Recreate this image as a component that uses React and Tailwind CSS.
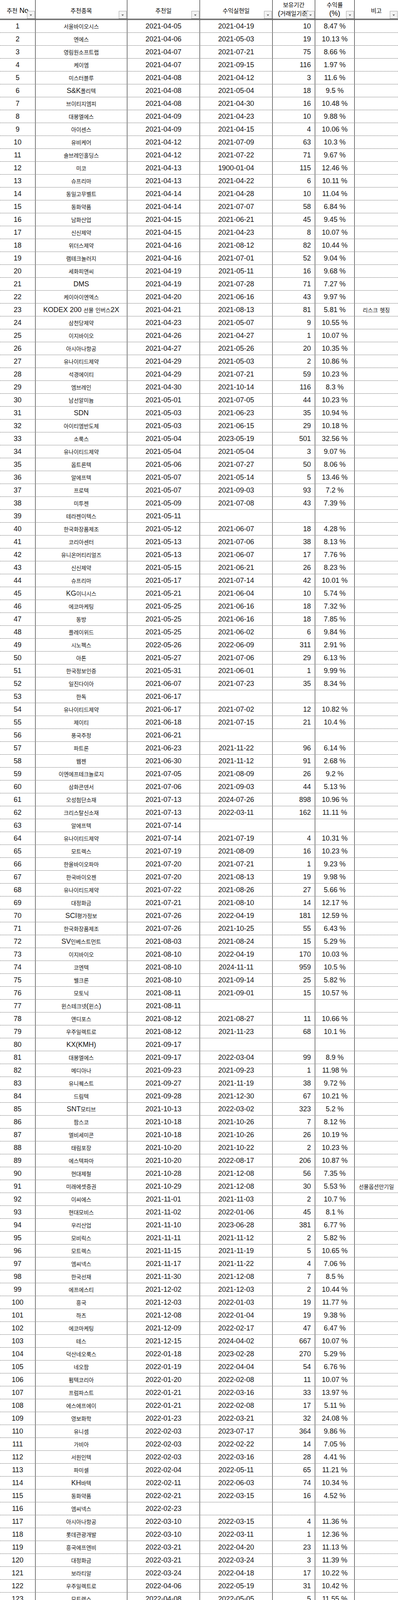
import React from 'react';

// 추천 No | 추천종목 | 추천일 | 수익실현일 | 보유기간 | 수익률 | 비고
const raw = `서울바이오시스|2021-04-05|2021-04-19|10|8.47
엔에스|2021-04-06|2021-05-03|19|10.13
영림원소프트랩|2021-04-07|2021-07-21|75|8.66
케이엠|2021-04-07|2021-09-15|116|1.97
미스터블루|2021-04-08|2021-04-12|3|11.6
S&K폴리텍|2021-04-08|2021-05-04|18|9.5
브이티지엠피|2021-04-08|2021-04-30|16|10.48
대봉엘에스|2021-04-09|2021-04-23|10|9.88
아이센스|2021-04-09|2021-04-15|4|10.06
유비케어|2021-04-12|2021-07-09|63|10.3
솔브레인홀딩스|2021-04-12|2021-07-22|71|9.67
미코|2021-04-13|1900-01-04|115|12.46
슈프리마|2021-04-13|2021-04-22|6|10.11
동일고무벨트|2021-04-14|2021-04-28|10|11.04
동화약품|2021-04-14|2021-07-07|58|6.84
남화산업|2021-04-15|2021-06-21|45|9.45
신신제약|2021-04-15|2021-04-23|8|10.07
위더스제약|2021-04-16|2021-08-12|82|10.44
램테크놀러지|2021-04-16|2021-07-01|52|9.04
세화피앤씨|2021-04-19|2021-05-11|16|9.68
DMS|2021-04-19|2021-07-28|71|7.27
케이아이엔엑스|2021-04-20|2021-06-16|43|9.97
KODEX 200 선물 인버스2X|2021-04-21|2021-08-13|81|5.81|리스크 헷징
삼천당제약|2021-04-23|2021-05-07|9|10.55
이지바이오|2021-04-26|2021-04-27|1|10.07
아시아나항공|2021-04-27|2021-05-26|20|10.35
유나이티드제약|2021-04-29|2021-05-03|2|10.86
석경에이티|2021-04-29|2021-07-21|59|10.23
엠브레인|2021-04-30|2021-10-14|116|8.3
남선알미늄|2021-05-01|2021-07-05|44|10.23
SDN|2021-05-03|2021-06-23|35|10.94
아이티엠반도체|2021-05-03|2021-06-15|29|10.18
소룩스|2021-05-04|2023-05-19|501|32.56
유나이티드제약|2021-05-04|2021-05-04|3|9.07
옵트론텍|2021-05-06|2021-07-27|50|8.06
알에프텍|2021-05-07|2021-05-14|5|13.46
프로텍|2021-05-07|2021-09-03|93|7.2
미투젠|2021-05-09|2021-07-08|43|7.39
테라젠이텍스|2021-05-11
한국화장품제조|2021-05-12|2021-06-07|18|4.28
코리아센터|2021-05-13|2021-07-06|38|8.13
유니온머티리얼즈|2021-05-13|2021-06-07|17|7.76
신신제약|2021-05-15|2021-06-21|26|8.23
슈프리마|2021-05-17|2021-07-14|42|10.01
KG이니시스|2021-05-21|2021-06-04|10|5.74
에코마케팅|2021-05-25|2021-06-16|18|7.32
동방|2021-05-25|2021-06-16|18|7.85
플레이위드|2021-05-25|2021-06-02|6|9.84
시노펙스|2022-05-26|2022-06-09|311|2.91
아톤|2021-05-27|2021-07-06|29|6.13
한국정보인증|2021-05-31|2021-06-01|1|9.99
일진다이아|2021-06-07|2021-07-23|35|8.34
한독|2021-06-17
유나이티드제약|2021-06-17|2021-07-02|12|10.82
제이티|2021-06-18|2021-07-15|21|10.4
풍국주정|2021-06-21
파트론|2021-06-23|2021-11-22|96|6.14
웹젠|2021-06-30|2021-11-12|91|2.68
이엔에프테크놀로지|2021-07-05|2021-08-09|26|9.2
삼화콘덴서|2021-07-06|2021-09-03|44|5.13
오성첨단소재|2021-07-13|2024-07-26|898|10.96
크리스탈신소재|2021-07-13|2022-03-11|162|11.11
알에프텍|2021-07-14
유나이티드제약|2021-07-14|2021-07-19|4|10.31
모트렉스|2021-07-19|2021-08-09|16|10.23
한올바이오파마|2021-07-20|2021-07-21|1|9.23
한국바이오젠|2021-07-20|2021-08-13|19|9.98
유나이티드제약|2021-07-22|2021-08-26|27|5.66
대정화금|2021-07-21|2021-08-10|14|12.17
SCI평가정보|2021-07-26|2022-04-19|181|12.59
한국화장품제조|2021-07-26|2021-10-25|55|6.43
SV인베스트먼트|2021-08-03|2021-08-24|15|5.29
이지바이오|2021-08-10|2022-04-19|170|10.03
코엔텍|2021-08-10|2024-11-11|959|10.5
웰크론|2021-08-10|2021-09-14|25|5.82
모토닉|2021-08-11|2021-09-01|15|10.57
윈스테크넷(윈스)|2021-08-11
앤디포스|2021-08-12|2021-08-27|11|10.66
우주일렉트로|2021-08-12|2021-11-23|68|10.1
KX(KMH)|2021-09-17
대봉엘에스|2021-09-17|2022-03-04|99|8.9
메디아나|2021-09-23|2021-09-23|1|11.98
유니퀘스트|2021-09-27|2021-11-19|38|9.72
드림텍|2021-09-28|2021-12-30|67|10.21
SNT모티브|2021-10-13|2022-03-02|323|5.2
팜스코|2021-10-18|2021-10-26|7|8.12
엘비세미콘|2021-10-18|2021-10-26|26|10.19
태림포장|2021-10-20|2021-10-22|2|10.23
에스텍파마|2021-10-20|2022-08-17|206|10.87
현대제철|2021-10-28|2021-12-08|56|7.35
미래에셋증권|2021-10-29|2021-12-08|30|5.53|선물옵션만기일
이씨에스|2021-11-01|2021-11-03|2|10.7
현대모비스|2021-11-02|2022-01-06|45|8.1
우리산업|2021-11-10|2023-06-28|381|6.77
모비릭스|2021-11-11|2021-11-12|2|5.82
모트렉스|2021-11-15|2021-11-19|5|10.65
엠씨넥스|2021-11-17|2021-11-22|4|7.06
한국선재|2021-11-30|2021-12-08|7|8.5
에프에스티|2021-12-02|2021-12-03|2|10.44
흥국|2021-12-03|2022-01-03|19|11.77
하츠|2021-12-08|2022-01-04|19|9.38
에코마케팅|2021-12-09|2022-02-17|47|6.47
테스|2021-12-15|2024-04-02|667|10.07
덕산네오룩스|2022-01-18|2023-02-28|270|5.29
네오팜|2022-01-19|2022-04-04|54|6.76
펌텍코리아|2022-01-20|2022-02-08|11|10.07
프럼파스트|2022-01-21|2022-03-16|33|13.97
에스에프에이|2022-01-21|2022-02-08|17|5.11
영보화학|2022-01-23|2022-03-21|32|24.08
유니셈|2022-02-03|2023-07-17|364|9.86
가비아|2022-02-03|2022-02-22|14|7.05
서원인텍|2022-02-03|2022-03-16|28|4.41
파미셀|2022-02-04|2022-05-11|65|11.21
KH바텍|2022-02-11|2022-06-03|74|10.34
동화약품|2022-02-21|2022-03-15|16|4.52
엠씨넥스|2022-02-23
아시아나항공|2022-03-10|2022-03-15|4|11.36
롯데관광개발|2022-03-10|2022-03-11|1|12.36
흥국에프엔비|2022-03-21|2022-04-20|23|11.13
대정화금|2022-03-21|2022-03-24|3|11.39
보라티알|2022-03-24|2022-04-18|17|10.22
우주일렉트로|2022-04-06|2022-05-19|31|10.42
모트렉스|2022-04-08|2022-05-05|5|11.55
아톤|2022-04-11|2022-06-15|32|7.06
삼성전자|2022-04-14|2023-05-30|273|10.07
동성화인텍|2022-04-17|2022-08-11|81|9.82
와이엠씨|2022-04-21|2023-07-12|358|12.3
현대미포조선|2022-05-11|2022-06-03|16|7.22
천보|2022-05-12|2022-05-18|5|11.15
삼화콘덴서|2022-05-13|2023-03-06|190|6.44
엠케이전자|2022-06-14|2022-06-28|41|10.45
비올|2022-06-14|2022-06-28|10|10.44
KCI|2022-06-17|2022-07-28|30|6.98
KH바텍|2022-06-21|2023-03-21|200|5.06
SK오션플랜트(삼강엠앤티)|2022-09-22
두산에너빌리티|2022-09-22|2022-11-14|37|10.54
아톤|2022-09-26|2024-09-24|231|11.33
세진중공업|2022-09-26|2023-04-10|112|10.77
동성화인텍|2022-10-03|2022-11-15|32|11.97
캠시스|2022-10-06|2022-10-12|3|13.57
KODEX 코스닥 150레버리지|2022-10-26|2022-11-11|12|13.25
ISC|2022-12-09|2023-01-25|33|12.01
일진파워|2022-12-16|2023-03-31|65|22.98
KODEX 코스닥 150레버리지|2023-01-03|2023-01-25|14|10.1
뉴프렉스|2023-01-04|2023-01-25|14|12.12
라온테크|2023-02-27|2023-03-17|15|9.53
영화테크|2023-02-28|2023-03-02|1|12.01
원준|2023-03-03|2023-03-07|3|10.57
뉴프렉스|2023-03-07|2023-12-27|204|9.53
ISC|2023-03-07|2023-03-28|15|10.46
HLB|2023-03-21|2023-11-06|214|69.59
롯데관광개발|2023-03-22|2023-08-10|92|11.45
피엔케이피부임상연구센타|2023-03-22|2024-06-13|348|11.01
우진|2023-04-04|2023-07-11|69|10.16
한국카본|2023-04-12|2023-07-13|80|13.7
티엘비|2023-04-14|2023-05-17|24|10.8
컴투스홀딩스|2023-04-16|2023-12-04|149|11.01
한화솔루션|2023-04-25
라온테크|2023-05-15|2023-05-30|12|10.44
범한퓨얼셀|2023-06-29|2024-05-23|206|11.72
코웰패션|2023-07-03|2023-08-03|23|11.09
GS|2023-07-07|2023-07-19|9|10.01
HK이노엔|2023-08-05|2023-08-10|4|10.21
녹십자웰빙|2023-08-13|2023-12-26|88|10.79
서희건설|2023-08-18|2024-04-08|161|5.1
원준|2023-08-21|2024-09-24|231|11.33
대원제약|2023-09-07|2023-11-03|50|10.93
우진|2023-09-16|2024-01-24|81|10.41
팬엔터테인먼트|2023-10-10|2025-03-10|336|12.56
롯데관광개발|2023-10-11|2023-11-03|18|10.31
한국카본|2023-10-24|2023-11-03|9|10.16
인텔리안테크|2023-10-30|2023-11-07|7|11.18
비에이치|2023-11-28|2024-05-08|110|13.69
지에스이|2023-12-17|2024-01-04|11|10.14
현대약품|2024-01-01|2024-07-23|122|12.75
핌스|2024-01-01|2024-01-09|6|12.75
인텔리안테크|2024-01-22|2024-05-22|84|11.16
파라다이스|2024-02-02|2024-03-27|36|11.36
일진파워|2024-02-11|2024-03-14|22|10.33
셀트리온|2024-02-20|2024-06-11|76|10.17
코리아써키트|2024-03-06|2025-02-17|219|10.17
지오엘리먼트|2024-03-20
에스앤에스텍|2024-04-18|2025-06-05|249|10.07
HK이노엔|2024-05-07|2024-07-10|41|11.06
이글벳|2024-06-09|2024-06-17|6|11.7
고영|2024-07-02|2025-01-21|115|21.33
티이엠씨|2024-07-08
에스엘|2024-09-17|2025-02-26|102|10.28
아바텍|2024-09-18
헥토파이낸셜|2024-09-26|2025-06-05|153|15.56
프로텍|2024-10-04
화신|2024-10-09|2024-10-11|3|10.57
아톤|2024-11-19|2024-11-19|1|14.86
KODEX 코스닥 150레버리지|2024-11-25|2025-02-06|47|14.86
글로벌텍스프리|2024-11-27|2025-02-10|47|16.61
한국카본|2025-01-13|2025-01-20|6|10.43
제이아이테크|2025-02-01|2025-06-05|74|11.96
티씨케이|2025-02-03|2025-02-06|4|10.44
KODEX 코스닥 150레버리지|2025-04-08|2025-04-21|9|15.23
포스코인터내셔널|2025-04-13
수산인더스트리|2025-04-22|2025-05-19|21|12.3
한글과컴퓨터|2025-06-02|2025-06-05|3|12.85
켐트로닉스|2025-06-03
에스티팜|2025-06-04`;

const picks = raw.split('\n').map((line) => line.split('|'));

const HANGUL = /([\u3131-\u318E\uAC00-\uD7A3]+)/;

// Hangul glyphs in the sheet run smaller than the Latin digits.
// Kept inside one span so the spaces survive inside a flex cell.
function Mixed({ text, hangul = "font-['Noto_Sans_CJK_KR',sans-serif] text-[14px]" }) {
  if (!text) return null;
  return (
    <span className="whitespace-pre">
      {text.split(HANGUL).map((part, i) =>
        i % 2 === 1 ? (
          <span key={i} className={hangul}>
            {part}
          </span>
        ) : (
          part
        )
      )}
    </span>
  );
}

const headHangul = "font-['Noto_Sans_CJK_KR',sans-serif] text-[15px]";

function FilterButton() {
  return (
    <div className="absolute right-[1px] top-[28px] w-[20px] h-[20px] bg-[#f3f3f3] border border-[#a6a6a6] flex items-center justify-center">
      <div className="w-0 h-0 mt-[2px] border-l-[3px] border-r-[3px] border-t-[4px] border-l-transparent border-r-transparent border-t-[#666]" />
    </div>
  );
}

function HeadLabel({ text }) {
  return (
    <div className="relative h-full overflow-hidden flex items-center justify-center whitespace-nowrap pt-[6px] border-l border-black first:border-l-0">
      <Mixed text={text} hangul={headHangul} />
      <FilterButton />
    </div>
  );
}

function HeadLabel2({ top, bottom }) {
  return (
    <div className="relative h-full overflow-hidden flex flex-col items-center justify-center whitespace-nowrap leading-[22px] pb-[2px] border-l border-black">
      <div>
        <Mixed text={top} hangul={headHangul} />
      </div>
      <div>
        <Mixed text={bottom} hangul={headHangul} />
      </div>
      <FilterButton />
    </div>
  );
}

function Row({ no, item }) {
  const [name, rec, done, days, pct, note] = item;
  return (
    <div className="grid grid-cols-[90px_235px_186px_186px_109px_101px_112px] h-[33px] overflow-hidden leading-[24px] border-b border-dotted border-[#3a3a3a]">
      <div className="flex items-center justify-center">{no}</div>
      <div className="flex items-center justify-center whitespace-nowrap overflow-hidden border-l border-solid border-black">
        <Mixed text={name} />
      </div>
      <div className="flex items-center justify-center border-l border-solid border-black">{rec}</div>
      <div className="flex items-center justify-center border-l border-solid border-black">{done}</div>
      <div className="flex items-center justify-end pr-[10px] border-l border-solid border-black">{days}</div>
      <div className="flex items-center justify-center whitespace-nowrap border-l border-solid border-black">
        {pct ? `${pct} %` : ''}
      </div>
      <div className="flex items-center justify-center whitespace-nowrap overflow-hidden border-l border-solid border-black">
        <Mixed text={note} />
      </div>
    </div>
  );
}

export default function App() {
  return (
    <div className="w-[1019px] bg-white text-[#151515] text-[18px] leading-[24px] font-['Liberation_Sans','Noto_Sans_CJK_KR',sans-serif]">
      {/* Header with autofilter buttons */}
      <div className="grid grid-cols-[90px_235px_186px_186px_109px_101px_112px] h-[51px] border-b-[3px] border-double border-black text-black">
        <HeadLabel text="추천 No" />
        <HeadLabel text="추천종목" />
        <HeadLabel text="추천일" />
        <HeadLabel text="수익실현일" />
        <HeadLabel2 top="보유기간" bottom="(거래일기준)" />
        <HeadLabel2 top="수익률" bottom="(%)" />
        <HeadLabel text="비고" />
      </div>

      {picks.map((item, i) => (
        <Row key={i} no={i + 1} item={item} />
      ))}

      {/* empty spare row */}
      <div className="grid grid-cols-[90px_235px_186px_186px_109px_101px_112px] h-[30px]">
        <div />
        <div className="border-l border-black" />
        <div className="border-l border-black" />
        <div className="border-l border-black" />
        <div className="border-l border-black" />
        <div className="border-l border-black" />
        <div className="border-l border-black" />
      </div>

      {/* 평균 */}
      <div className="border-b-[3px] border-black">
        <div className="grid grid-cols-[90px_235px_186px_186px_109px_101px_112px] h-[50px] border-t-[4px] border-double border-black">
          <div />
          <div className="flex items-center justify-center border-l border-solid border-black font-bold">
            <Mixed text="평균" hangul={headHangul} />
          </div>
          <div className="border-l border-solid border-black" />
          <div className="border-l border-solid border-black" />
          <div className="flex items-center justify-end pr-[11px] border-l border-solid border-black text-[#ff0000] text-[20px]">
            76.7
          </div>
          <div className="flex items-center justify-center border-l border-solid border-black text-[#ff0000] text-[20px]">
            10.42 %
          </div>
          <div className="border-l border-solid border-black" />
        </div>
      </div>
    </div>
  );
}
